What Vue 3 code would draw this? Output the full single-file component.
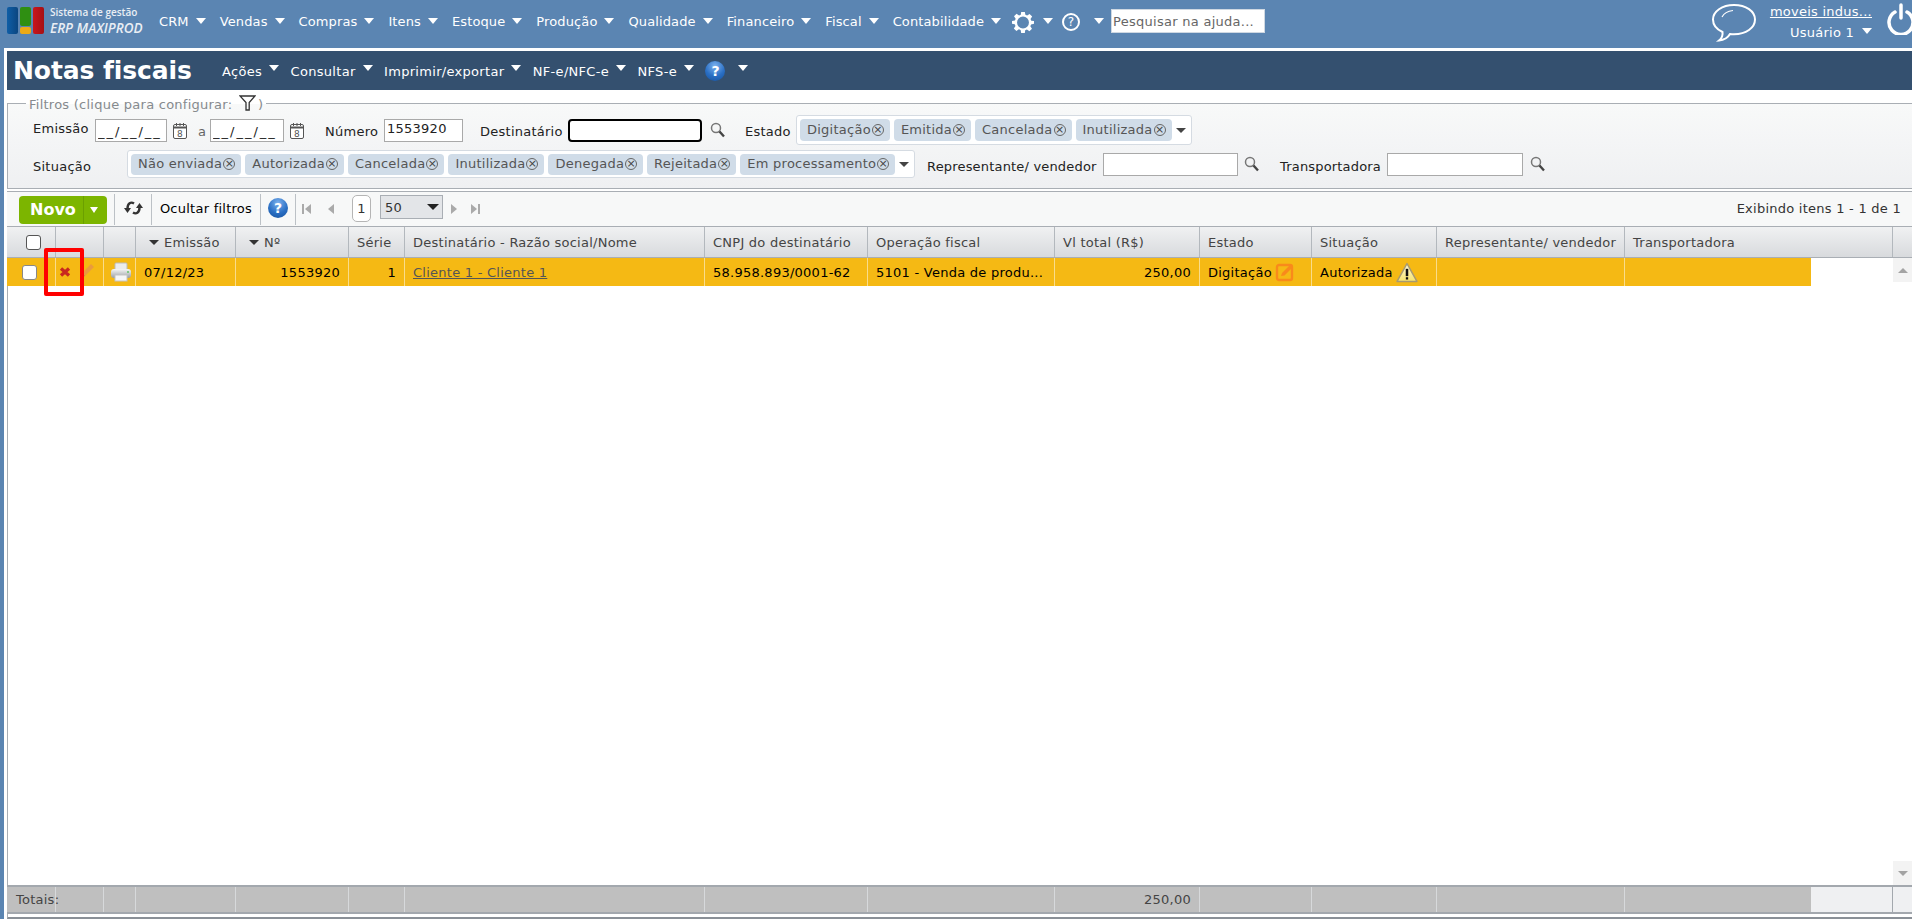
<script setup>
const nav = ['CRM', 'Vendas', 'Compras', 'Itens', 'Estoque', 'Produção', 'Qualidade', 'Financeiro', 'Fiscal', 'Contabilidade']
const sub = ['Ações', 'Consultar', 'Imprimir/exportar', 'NF-e/NFC-e', 'NFS-e']
const estado = ['Digitação', 'Emitida', 'Cancelada', 'Inutilizada']
const situacao = ['Não enviada', 'Autorizada', 'Cancelada', 'Inutilizada', 'Denegada', 'Rejeitada', 'Em processamento']
const headers = [
  { t: '', k: 'chk' }, { t: '' }, { t: '' },
  { t: 'Emissão', sort: true }, { t: 'Nº', sort: true }, { t: 'Série' },
  { t: 'Destinatário - Razão social/Nome' }, { t: 'CNPJ do destinatário' }, { t: 'Operação fiscal' },
  { t: 'Vl total (R$)' }, { t: 'Estado' }, { t: 'Situação' }, { t: 'Representante/ vendedor' }, { t: 'Transportadora' }, { t: '' }
]
const totals = Array.from({ length: 14 }, (_, i) => i)
</script>

<template>
  <div class="app">
    <header class="topbar">
      <div class="logo">
        <div class="blocks">
          <span class="b blue"></span>
          <span class="mid"><span class="b green"></span><span class="b yellow"></span></span>
          <span class="b red"></span>
        </div>
        <div class="logotext">
          <span class="l1">Sistema de gestão</span>
          <span class="l2">ERP MAXIPROD</span>
        </div>
      </div>
      <nav class="nav">
        <span v-for="n in nav" :key="n" class="navitem">{{ n }}<i class="arrow"></i></span>
        <span class="navicon gear">
          <svg width="22" height="22" viewBox="0 0 24 24"><path fill="#fff" fill-rule="evenodd" d="M10 1h4l.6 3.200 1.900.8 2.700-1.800 2.800 2.800-1.800 2.700.8 1.900L24 11v3l-3.200.7-.8 1.900 1.800 2.700-2.800 2.800-2.700-1.800-1.900.8L14 24h-4l-.6-3.200-1.900-.8-2.700 1.800-2.800-2.800 1.800-2.700-.8-1.900L0 14v-3l3.200-.6.8-1.900-1.800-2.700 2.800-2.800 2.700 1.800 1.900-.8zM12 6a6.500 6.500 0 1 0 0 13 6.500 6.500 0 0 0 0-13z"/></svg>
          <i class="arrow"></i>
        </span>
        <span class="navicon helpi">
          <span class="ringq">?</span>
          <i class="arrow"></i>
        </span>
      </nav>
      <input class="helpsearch" placeholder="Pesquisar na ajuda..." />
      <div class="right">
        <svg class="chat" width="46" height="40" viewBox="0 0 46 40" fill="none" stroke="#fff" stroke-width="2">
          <path d="M23 2C11 2 2 8.500 2 16.500c0 5.500 4 10 9.500 12.500.5 3-.5 6-3.500 8.500 5-.5 9-3 11-6.500 1.300.2 2.700.3 4 .3 12 0 21-6.500 21-14.800S35 2 23 2z"/>
          <path d="M11 14c2-4 6-6 11-6.500" stroke-width="1.200"/>
        </svg>
        <div class="user">
          <a class="company">moveis indus...</a>
          <span class="username">Usuário 1<i class="arrow small"></i></span>
        </div>
        <svg class="power" width="28" height="32" viewBox="0 0 28 32" fill="none" stroke="#fff" stroke-width="3.500" stroke-linecap="round">
          <path d="M8 9a12 12 0 1 0 12 0"/>
          <path d="M14 2v13"/>
        </svg>
      </div>
    </header>

    <main class="page">
      <div class="titlebar">
        <h1>Notas fiscais</h1>
        <div class="subnav">
          <span v-for="s in sub" :key="s" class="subitem">{{ s }}<i class="arrow"></i></span>
          <span class="ball small-ball">?</span>
          <i class="arrow tail"></i>
        </div>
      </div>

      <fieldset class="filters">
        <legend>
          Filtros (clique para configurar:
          <svg class="funnel" width="17" height="16" viewBox="0 0 17 16" fill="none" stroke="#333" stroke-width="1.300"><path d="M1 1h15l-5.800 6.500V15H7V7.500z"/></svg>
          )
        </legend>
        <div class="frow r1">
          <label class="lb up w62">Emissão</label>
          <input class="ti w72 date" value="__/__/__" />
          <svg class="cal" width="16" height="18" viewBox="0 0 16 18" fill="#fff" stroke="#555"><rect x="1.500" y="2.500" width="13" height="14" rx="1.500"/><path d="M1.500 5.500h13" stroke-width="2"/><path d="M4.500 1v3M8 1v3M11.500 1v3"/><text x="8" y="14.500" text-anchor="middle" font-size="9" fill="#555" stroke="none" font-family="DejaVu Sans">8</text></svg>
          <label class="lb lba">a</label>
          <input class="ti w74 date" value="__/__/__" />
          <svg class="cal" width="16" height="18" viewBox="0 0 16 18" fill="#fff" stroke="#555"><rect x="1.500" y="2.500" width="13" height="14" rx="1.500"/><path d="M1.500 5.500h13" stroke-width="2"/><path d="M4.500 1v3M8 1v3M11.500 1v3"/><text x="8" y="14.500" text-anchor="middle" font-size="9" fill="#555" stroke="none" font-family="DejaVu Sans">8</text></svg>
          <label class="lb lbnum">Número</label>
          <input class="ti w79" value="1553920" />
          <label class="lb lbdest">Destinatário</label>
          <input class="ti focus" />
          <svg class="lens l8" width="15" height="16" viewBox="0 0 15 16" fill="none"><circle cx="6" cy="6" r="4.500" stroke="#777" stroke-width="1.500"/><path d="M9.500 9.500l4.500 5" stroke="#444" stroke-width="2.400"/></svg>
          <label class="lb lbest">Estado</label>
          <div class="multi m1">
            <span v-for="c in estado" :key="c" class="chip">{{ c }}<i class="x">×</i></span>
            <i class="drop"></i>
          </div>
        </div>
        <div class="frow r2">
          <label class="lb down wsit">Situação</label>
          <div class="multi m2">
            <span v-for="c in situacao" :key="c" class="chip">{{ c }}<i class="x">×</i></span>
            <i class="drop"></i>
          </div>
          <label class="lb down lbrep">Representante/ vendedor</label>
          <input class="ti w135" />
          <svg class="lens l6" width="15" height="16" viewBox="0 0 15 16" fill="none"><circle cx="6" cy="6" r="4.500" stroke="#777" stroke-width="1.500"/><path d="M9.500 9.500l4.500 5" stroke="#444" stroke-width="2.400"/></svg>
          <label class="lb down lbtra">Transportadora</label>
          <input class="ti w136" />
          <svg class="lens l7" width="15" height="16" viewBox="0 0 15 16" fill="none"><circle cx="6" cy="6" r="4.500" stroke="#777" stroke-width="1.500"/><path d="M9.500 9.500l4.500 5" stroke="#444" stroke-width="2.400"/></svg>
        </div>
      </fieldset>

      <div class="toolbar">
        <div class="novo"><span class="novot">Novo</span><span class="novoa"><i class="tri"></i></span></div>
        <div class="tb refresh">
          <svg width="19" height="16" viewBox="0 0 19 16" fill="none" stroke="#333" stroke-width="2.400"><path d="M10 3.500C7 1.500 3.500 3 3.500 8.500"/><path d="M9 12.500c3 2 6.500.5 6.500-5"/><path d="M0 8l3.500 5L7 8z" fill="#333" stroke="none"/><path d="M12 8l3.500-5L19 8z" fill="#333" stroke="none"/></svg>
        </div>
        <div class="tb hide">Ocultar filtros</div>
        <div class="tb help"><span class="ball">?</span></div>
        <div class="pager">
          <svg class="pg first" width="10" height="12" viewBox="0 0 10 12" fill="#aaa"><rect x="0" y="1" width="2" height="10"/><path d="M9 1v10L3 6z"/></svg>
          <svg class="pg prev" width="8" height="12" viewBox="0 0 8 12" fill="#aaa"><path d="M7 1v10L1 6z"/></svg>
          <span class="pagenum">1</span>
          <div class="psize"><span>50</span><i class="drop dark"></i></div>
          <svg class="pg next" width="8" height="12" viewBox="0 0 8 12" fill="#aaa"><path d="M1 1v10l6-5z"/></svg>
          <svg class="pg last" width="10" height="12" viewBox="0 0 10 12" fill="#aaa"><path d="M1 1v10l6-5z"/><rect x="8" y="1" width="2" height="10"/></svg>
        </div>
        <div class="showing">Exibindo itens 1 - 1 de 1</div>
      </div>

      <section class="grid">
        <div class="ghead cols-head">
          <div v-for="(h, i) in headers" :key="i" class="hc">
            <span v-if="h.k === 'chk'" class="cb hcb"></span>
            <i v-if="h.sort" class="sortd"></i>{{ h.t }}
          </div>
        </div>
        <div class="gbody">
          <div class="gmain">
            <div class="grow cols">
              <div class="c cen"><span class="cb rcb"></span></div>
              <div class="c actions">
                <svg width="12" height="12" viewBox="0 0 12 12" stroke="#c8291f" stroke-width="3.400"><path d="M2 2.500l8 7M10 2.500l-8 7"/></svg>
                <svg class="pencil" width="17" height="17" viewBox="0 0 17 17"><path d="M3 11L12 2l3 3-9 9z" fill="#ea9b3c"/><path d="M3 11l-2 5 5-2z" fill="#9c8455"/></svg>
              </div>
              <div class="c cen printer">
                <svg width="22" height="20" viewBox="0 0 22 20"><defs><linearGradient id="pr" x1="0" y1="0" x2="0" y2="1"><stop offset="0" stop-color="#f6f6f6"/><stop offset="1" stop-color="#9a9fa3"/></linearGradient></defs><rect x="5" y="1" width="12" height="8" fill="#ececec" stroke="#bbb" rx="1"/><rect x="1" y="7" width="20" height="9" rx="3" fill="url(#pr)"/><rect x="5" y="13" width="12" height="6" fill="#f6f6f6" stroke="#c4c4c4"/><circle cx="18" cy="10" r="1" fill="#5ec46a"/></svg>
              </div>
              <div class="c">07/12/23</div>
              <div class="c r">1553920</div>
              <div class="c r">1</div>
              <div class="c"><a class="link">Cliente 1 - Cliente 1</a></div>
              <div class="c">58.958.893/0001-62</div>
              <div class="c">5101 - Venda de produ...</div>
              <div class="c r">250,00</div>
              <div class="c">Digitação
                <svg class="after" width="20" height="20" viewBox="0 0 20 20" fill="none"><rect x="2" y="3" width="15" height="15" rx="2" stroke="#f98a1b" stroke-width="2.400"/><path d="M6 14l1-3 8-8 2.500 2.500-8 8z" fill="#f98a1b"/></svg>
              </div>
              <div class="c">Autorizada
                <svg class="after" width="22" height="21" viewBox="0 0 21 20"><defs><linearGradient id="wr" x1="0" y1="0" x2="0" y2="1"><stop offset="0" stop-color="#fffbe0"/><stop offset="1" stop-color="#f7e36a"/></linearGradient></defs><path d="M10.500 1.500L20 18.500H1z" fill="url(#wr)" stroke="#a89a70" stroke-width="1.400" stroke-linejoin="round"/><path d="M10.500 6.500v7" stroke="#111" stroke-width="2.400"/><path d="M10.500 14.500v2.200" stroke="#111" stroke-width="2.200"/></svg>
              </div>
              <div class="c"></div>
              <div class="c noline"></div>
            </div>
          </div>
          <div class="sbar">
            <span class="sbtn"><i class="sup"></i></span>
            <span class="sbtn"><i class="sdn"></i></span>
          </div>
        </div>
        <div class="gfoot cols-foot">
          <div v-for="i in totals" :key="i" class="fc" :class="{ r: i === 9 }">
            <span v-if="i === 0" class="tot">Totais:</span>
            <template v-if="i === 9">250,00</template>
          </div>
          <div class="fc blank"></div>
          <div class="fc blank2"></div>
        </div>
        <div class="mark"></div>
      </section>
      <div class="endline"></div>
    </main>
  </div>
</template>

<style>
html, body { margin: 0; padding: 0; background: #fff; overflow: hidden; }
</style>

<style scoped>
* { box-sizing: border-box; }
.app {
  width: 1912px; height: 919px; background: #5b85b2; display: flex; flex-direction: column;
  font-family: "DejaVu Sans", Verdana, sans-serif; font-size: 13px; color: #000; overflow: hidden; letter-spacing: .25px;
}
i { font-style: normal; }
.topbar { height: 48px; flex: none; display: flex; align-items: center; color: #fff; }
.logo { width: 159px; flex: none; display: flex; padding-left: 7px; align-items: center; letter-spacing: 0; }
.blocks { display: flex; gap: 2px; height: 27px; margin-top: -7px; }
.blocks .b { display: block; width: 11px; border-radius: 2px; }
.blocks .mid { display: flex; flex-direction: column; gap: 1px; }
.blue { height: 27px; background: linear-gradient(90deg, #0f5ea6, #0b4680); }
.red { height: 27px; background: linear-gradient(90deg, #c9161b, #a50f14); }
.green { height: 19px; background: #2f8f12; }
.yellow { height: 7px; background: #edaa16; }
.logotext { display: flex; flex-direction: column; margin-left: 6px; margin-top: -6px; font-family: "Open Sans", sans-serif; color: #e9eef4; white-space: nowrap; }
.l1 { font-size: 10px; font-weight: 600; line-height: 13px; }
.l2 { font-size: 13.5px; font-weight: 600; font-style: italic; line-height: 18px; }
.nav { display: flex; align-items: center; letter-spacing: .12px; margin-top: -5px; }
.navitem { display: inline-flex; align-items: center; margin-right: 14px; white-space: nowrap; }
.arrow { display: inline-block; width: 0; height: 0; border-left: 5px solid transparent; border-right: 5px solid transparent; border-top: 6px solid #fff; margin-left: 7px; margin-bottom: 6px; }
.nav .arrow { margin-bottom: 1px; }
.navicon { display: inline-flex; align-items: center; }
.gear { margin-left: -3px; margin-right: 9px; }
.gear .arrow { margin-left: 9px; }
.ringq { width: 18px; height: 18px; border: 2px solid #fff; border-radius: 50%; text-align: center; line-height: 14px; font-size: 12px; }
.helpi .arrow { margin-left: 14px; }
.helpi { margin-right: 7px; }
.helpsearch { width: 154px; height: 24px; margin-top: -6px; border: 1px solid #cfd8e2; padding: 0 1px; font: 13px "DejaVu Sans", sans-serif; background: #fff; letter-spacing: .27px; }
.helpsearch::placeholder { color: #666; opacity: 1; }
.right { margin-left: auto; display: flex; align-items: center; height: 48px; }
.chat { margin-right: 13px; margin-top: -2px; }
.user { display: flex; flex-direction: column; align-items: flex-end; width: 102px; margin-right: 15px; }
.company { text-decoration: underline; line-height: 21px; margin-top: -4px; white-space: nowrap; }
.username { display: inline-flex; align-items: center; line-height: 21px; }
.arrow.small { margin-left: 8px; margin-bottom: 4px; }
.power { margin-right: -3px; margin-top: -10px; flex: none; }

.page { flex: 1; min-height: 0; margin-left: 4px; border-top: 3px solid #fff; background: #fff; padding-left: 3px; display: flex; flex-direction: column; }
.titlebar { height: 39px; flex: none; background: #34506f; display: flex; align-items: center; color: #fff; padding-left: 6px; }
h1 { margin: 0; font-size: 25px; line-height: 39px; font-weight: 700; width: 209px; letter-spacing: -.1px; }
.subnav { display: flex; align-items: center; letter-spacing: .3px; }
.subitem { display: inline-flex; align-items: center; margin-right: 11.5px; white-space: nowrap; padding-top: 1px; }
.ball { display: inline-block; width: 20px; height: 20px; border-radius: 50%; background: radial-gradient(circle at 50% 25%, #7db2ee, #2a6fc4 55%, #15509c); color: #fff; font-weight: 700; text-align: center; line-height: 20px; font-size: 14px; letter-spacing: 0; }
.small-ball { margin-left: 0; }
.arrow.tail { margin-left: 13px; }

.filters { flex: none; margin: 5px 0 0; padding: 4px 0 10px; height: 94px; min-width: 0; border: 0; border-top: 1px solid #a9aeb4; border-left: 1px solid #a9aeb4; border-bottom: 1px solid #a9aeb4; background: linear-gradient(#f8f9f9, #eff0f2); }
legend { margin-left: 18px; padding: 0 3px; color: #868a8e; height: 16px; line-height: 16px; white-space: nowrap; font-size: 13px; }
.funnel { vertical-align: -2px; margin: 0 -2px 0 2px; }
.frow { display: flex; align-items: center; padding-left: 25px; white-space: nowrap; }
.r1 { height: 30px; margin-bottom: 5px; }
.r2 { height: 28px; }
.lb { color: #222; flex: none; margin-top: 3px; }
.lb.up { margin-top: -4px; }
.lb.down { margin-top: 4px; }
.w62 { width: 62px; }
.wsit { width: 94px; }
.ti { flex: none; height: 23px; border: 1px solid #a9a9a9; padding: 0 2px 3px; font: 13px "DejaVu Sans", sans-serif; color: #222; background: #fff; outline: 0; letter-spacing: .25px; }
.date { letter-spacing: 2px; padding-top: 3px; padding-bottom: 0; }
.w72 { width: 72px; } .w74 { width: 74px; } .w79 { width: 79px; } .w135 { width: 135px; } .w136 { width: 136px; }
.cal { flex: none; margin-left: 5px; margin-top: 1px; }
.lba { margin-left: 10px; width: 12px; color: #666; }
.lbnum { margin-left: 20px; width: 59px; }
.lbdest { margin-left: 17px; width: 88px; }
.focus { width: 134px; border: 2px solid #000; border-radius: 4px; }
.lens { flex: none; }
.l8 { margin-left: 8px; } .l6 { margin-left: 6px; } .l7 { margin-left: 7px; }
.lbest { margin-left: 20px; width: 51px; }
.multi { flex: none; display: flex; align-items: center; gap: 4px; background: #fff; border: 1px solid #d5dbe2; border-radius: 3px; padding-left: 3px; }
.m1 { width: 396px; height: 30px; }
.m2 { width: 788px; height: 28px; }
.chip { flex: none; display: inline-flex; align-items: center; height: 22px; padding: 0 6px 2px 7px; border-radius: 4px; background: #d0dce8; color: #555; }
.m2 .chip { height: 21px; }
.x { display: inline-block; width: 12px; height: 12px; border: 1px solid #666; border-radius: 50%; margin-left: 1px; margin-top: 2px; font-size: 11px; line-height: 9px; text-align: center; color: #444; letter-spacing: 0; }
.drop { display: inline-block; margin-left: auto; margin-right: 6px; width: 0; height: 0; border-left: 5px solid transparent; border-right: 5px solid transparent; border-top: 5px solid #444; }
.lbrep { margin-left: 12px; width: 176px; letter-spacing: .18px; }
.lbtra { margin-left: 21px; width: 107px; letter-spacing: .18px; }

.toolbar { flex: none; margin-top: 2px; height: 35px; border-top: 1px solid #a9aeb4; background: #f7f8f8; display: flex; align-items: center; }
.novo { margin-left: 12px; width: 88px; height: 28px; display: flex; background: #7cb500; border-radius: 4px; color: #fff; font-weight: 700; font-size: 16px; flex: none; margin-top: 1px; letter-spacing: 0; }
.novot { width: 64px; line-height: 28px; padding-left: 11px; }
.novoa { flex: 1; border-left: 1px solid #6ba000; display: flex; align-items: center; justify-content: center; }
.tri { width: 0; height: 0; border-left: 4px solid transparent; border-right: 4px solid transparent; border-top: 6px solid #fff; margin-left: -3px; }
.tb { height: 31px; flex: none; border-right: 1px solid #bcc1c6; display: flex; align-items: center; justify-content: center; padding-bottom: 2px; }
.refresh { width: 38px; margin-left: 7px; border-left: 1px solid #bcc1c6; }
.hide { width: 109px; }
.help { width: 35px; }
.pager { display: flex; align-items: center; }
.pg { flex: none; }
.first { margin-left: 6px; }
.prev { margin-left: 15px; }
.pagenum { flex: none; width: 19px; height: 27px; margin-left: 17px; margin-top: -1px; border: 1px solid #b5b5b5; border-radius: 5px; background: #fff; text-align: center; line-height: 25px; color: #333; }
.psize { flex: none; width: 63px; height: 24px; margin-left: 9px; margin-top: -4px; padding-left: 4px; background: #e3e5e8; border: 1px solid #a9aeb4; display: flex; align-items: center; color: #333; }
.drop.dark { border-top-color: #222; border-left-width: 6px; border-right-width: 6px; border-top-width: 6px; margin-right: 3px; }
.next { margin-left: 7px; }
.last { margin-left: 12px; }
.showing { margin-left: auto; padding-right: 11px; padding-bottom: 2px; color: #333; }

.grid { flex: 1; min-height: 0; display: flex; flex-direction: column; position: relative; border-left: 1px solid #a9aeb4; }
.ghead { flex: none; height: 32px; display: grid; background: linear-gradient(#f0f1f2, #d8dadd); border-top: 1px solid #a9aeb4; border-bottom: 1px solid #a9aeb4; margin-left: -1px; }
.cols-head { grid-template-columns: 49px 48px 32px 100px 113px 56px 300px 163px 187px 145px 112px 125px 188px 268px 1fr; }
.hc { display: flex; align-items: center; padding-left: 8px; color: #444; border-right: 1px solid #b3b8bd; white-space: nowrap; }
.hc:last-child { border-right: 0; }
.sortd { width: 0; height: 0; border-left: 5px solid transparent; border-right: 5px solid transparent; border-top: 5px solid #333; margin-right: 5px; margin-left: 5px; }
.cb { display: inline-block; width: 15px; height: 15px; background: #fff; border: 1px solid #555; border-radius: 3px; }
.hcb { margin-left: 11px; }
.gbody { flex: 1; min-height: 0; display: flex; }
.gmain { flex: 1; min-width: 0; }
.grow { height: 28px; display: grid; background: #f5b914; margin-left: -1px; }
.cols { grid-template-columns: 49px 48px 32px 100px 113px 56px 300px 163px 187px 145px 112px 125px 188px 186px; width: 1804px; }
.c { display: flex; align-items: center; padding: 0 8px; border-right: 1px solid #f9dc8b; white-space: nowrap; }
.c.noline { border-right: 0; }
.c.r { justify-content: flex-end; padding-right: 8px; }
.cen { justify-content: center; padding: 0; }
.printer { padding-left: 3px; }
.rcb { border-color: #888; margin-right: 4px; }
.actions { padding: 0 0 0 3px; }
.pencil { margin-left: 8px; margin-top: -3px; flex: none; }
.link { color: #555; text-decoration: underline; }
.after { margin-left: 3px; flex: none; }
.sbar { width: 19px; flex: none; display: flex; flex-direction: column; justify-content: space-between; }
.sbtn { height: 24px; background: #f3f3f3; display: flex; align-items: center; justify-content: center; }
.sup { width: 0; height: 0; border-left: 5px solid transparent; border-right: 5px solid transparent; border-bottom: 5px solid #a3a3a3; }
.sdn { width: 0; height: 0; border-left: 5px solid transparent; border-right: 5px solid transparent; border-top: 5px solid #a3a3a3; }
.gfoot { flex: none; height: 29px; display: grid; background: #bfbfbf; border-top: 2px solid #a3a8ae; border-bottom: 2px solid #a3a8ae; margin-left: -1px; }
.cols-foot { grid-template-columns: 49px 48px 32px 100px 113px 56px 300px 163px 187px 145px 112px 125px 188px 186px 82px 1fr; }
.fc { display: flex; align-items: center; border-right: 1px solid #d7d9db; color: #444; white-space: nowrap; }
.fc.r { justify-content: flex-end; padding-right: 8px; }
.tot { padding-left: 9px; }
.blank { background: #eff0f2; border-right: 1px solid #a3a8ae; }
.blank2 { background: #eff0f2; border-right: 0; }
.fc:nth-child(14) { border-right: 0; }
.mark { position: absolute; left: 36px; top: 22px; width: 40px; height: 48px; border: 4px solid #f00; border-radius: 2px; pointer-events: none; }
.endline { flex: none; height: 5px; border-left: 1px solid #a9aeb4; border-bottom: 2px solid #8a9097; }
</style>
